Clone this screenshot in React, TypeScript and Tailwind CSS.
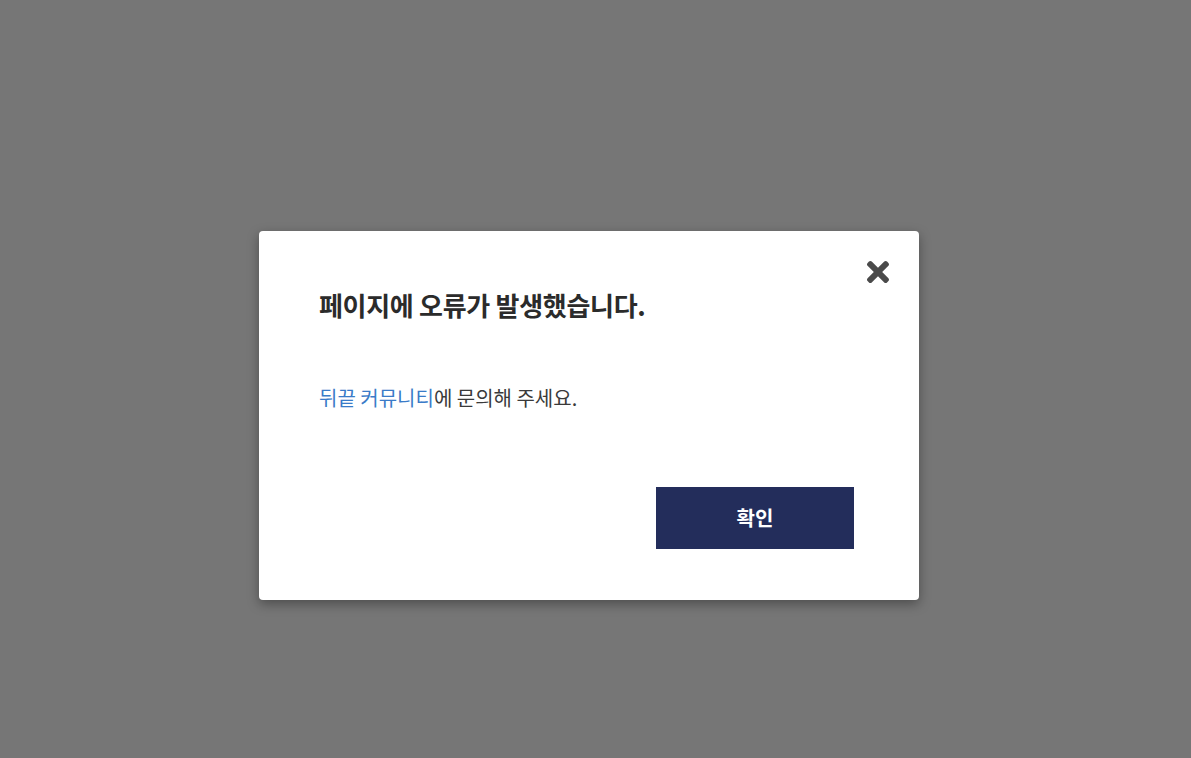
import React from 'react';
import { FaTimes } from 'react-icons/fa';

export default function App() {
  return (
    <div
      className="min-h-screen w-full bg-[#767676] flex justify-center items-start pt-[231px] pr-[13px]"
      style={{ fontFamily: '"Noto Sans CJK KR", "Noto Sans", sans-serif' }}
    >
      {/* Error modal */}
      <div className="relative w-[660px] bg-white rounded-[4px] shadow-[0_4px_12px_rgba(0,0,0,0.35)] pl-[60px] pr-[65px] pt-[60px] pb-[51px]">
        <button className="absolute top-[25px] right-[25px] text-[#4a4a4a]">
          <FaTimes size={32} />
        </button>

        <h2 className="text-[26px] leading-[28px] font-bold text-[#2b2b2b] tracking-[-0.3px]">
          페이지에 오류가 발생했습니다.
        </h2>

        <p className="mt-[65px] text-[20px] leading-[28px] text-[#3a3a3a]">
          <a href="#" className="text-[#3a7bc8]">뒤끝 커뮤니티</a>에 문의해 주세요.
        </p>

        <div className="mt-[75px] flex justify-end">
          <button className="w-[198px] h-[62px] bg-[#232d5b] text-white text-[20px] font-bold">
            확인
          </button>
        </div>
      </div>
    </div>
  );
}
